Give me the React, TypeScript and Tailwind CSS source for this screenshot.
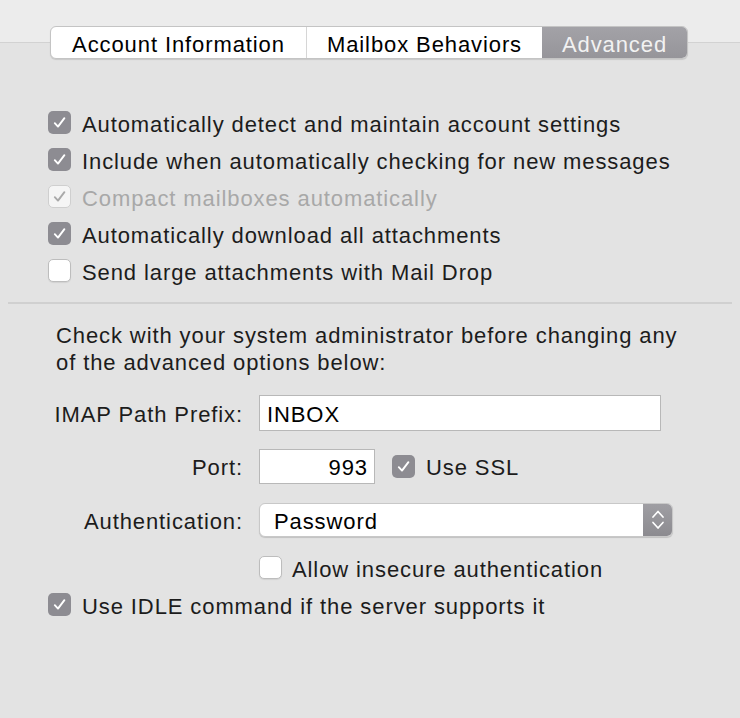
import React from "react"

const font = { fontFamily: '"Liberation Sans", Arial, sans-serif' }

type BoxState = "on" | "off" | "dim"

function Check({ state }: { state: BoxState }) {
  if (state === "off") {
    return <span className="block w-[23px] h-[23px] rounded-[5px] bg-white border border-[#bdbdbd] shadow-[0_1px_1px_rgba(0,0,0,0.08)] shrink-0" />
  }
  const dim = state === "dim"
  return (
    <span
      className={
        dim
          ? "flex items-center justify-center w-[23px] h-[23px] rounded-[5px] bg-[#f5f5f5] border border-[#cfcfcf] shrink-0"
          : "flex items-center justify-center w-[23px] h-[23px] rounded-[5px] bg-[#8d8c92] shrink-0"
      }
    >
      <svg width="15" height="15" viewBox="0 0 15 15" aria-hidden>
        <path
          d="M2.8 8.2 L6 11.6 L12.4 3.2"
          fill="none"
          stroke={dim ? "#a9a9a9" : "#ffffff"}
          strokeWidth="1.9"
          strokeLinecap="round"
          strokeLinejoin="round"
        />
      </svg>
    </span>
  )
}

function Row({ state, label }: { state: BoxState; label: string }) {
  return (
    <div className="flex items-center h-[37px] gap-[11px]">
      <Check state={state} />
      <span className={state === "dim" ? "pt-[3px] text-[#a8a8a8]" : "pt-[3px] text-[#1c1c1c]"}>{label}</span>
    </div>
  )
}

export default function App() {
  return (
    <div className="w-[740px] h-[718px] bg-[#e3e3e3] overflow-hidden text-[22px] tracking-[0.9px]" style={font}>
      {/* window toolbar strip */}
      <div className="h-[43px] bg-[#ececec] border-b border-[#d2d2d2]" />

      {/* segmented control */}
      <div className="relative -mt-[17px] ml-[50px] w-[638px] h-[33px] flex rounded-[6px] border border-[#c4c4c4] bg-white shadow-[0_1px_1px_rgba(0,0,0,0.12)] overflow-hidden">
        <div className="w-[256px] pt-[3px] flex items-center justify-center text-black border-r border-[#d6d6d6]">Account Information</div>
        <div className="w-[235px] pt-[3px] flex items-center justify-center text-black">Mailbox Behaviors</div>
        <div className="flex-1 pt-[3px] flex items-center justify-center bg-gradient-to-b from-[#a3a2a7] to-[#96959a] text-[#f2f2f2]">Advanced</div>
      </div>

      <div className="mt-[45px] pl-[48px]">
        <Row state="on" label="Automatically detect and maintain account settings" />
        <Row state="on" label="Include when automatically checking for new messages" />
        <Row state="dim" label="Compact mailboxes automatically" />
        <Row state="on" label="Automatically download all attachments" />
        <Row state="off" label="Send large attachments with Mail Drop" />
      </div>

      <div className="mt-[13px] mx-[8px] h-[2px] bg-[#d0d0d0]" />

      <p className="mt-[18px] ml-[56px] w-[640px] leading-[27px] text-[#1c1c1c]">
        Check with your system administrator before changing any of the advanced options below:
      </p>

      <div className="mt-[19px] flex flex-col text-[#1c1c1c]">
        <div className="flex items-center h-[36px]">
          <span className="w-[243px] pt-[2px] text-right">IMAP Path Prefix:</span>
          <div className="ml-[16px] w-[402px] h-[36px] pt-[2px] bg-white border border-[#b8b8b8] flex items-center px-[7px] text-black">INBOX</div>
        </div>

        <div className="flex items-center h-[35px] mt-[18px]">
          <span className="w-[243px] pt-[2px] text-right">Port:</span>
          <div className="ml-[16px] w-[116px] h-[35px] pt-[2px] bg-white border border-[#b8b8b8] flex items-center justify-end px-[6px] text-black">993</div>
          <div className="ml-[17px] flex items-center gap-[11px]">
            <Check state="on" />
            <span className="pt-[2px]">Use SSL</span>
          </div>
        </div>

        <div className="flex items-center h-[34px] mt-[19px]">
          <span className="w-[243px] pt-[2px] text-right">Authentication:</span>
          <div className="ml-[16px] w-[414px] h-[34px] flex rounded-[6px] bg-white border border-[#c8c8c8] shadow-[0_1px_1px_rgba(0,0,0,0.15)] overflow-hidden">
            <span className="flex-1 flex items-center pt-[2px] pl-[14px] text-black">Password</span>
            <span className="w-[29px] flex items-center justify-center bg-gradient-to-b from-[#9f9ea3] to-[#8c8b90]">
              <svg width="14" height="22" viewBox="0 0 14 22" aria-hidden>
                <path d="M2 8 L7 2.5 L12 8" fill="none" stroke="#fff" strokeWidth="1.7" strokeLinecap="round" strokeLinejoin="round" />
                <path d="M2 13.5 L7 19 L12 13.5" fill="none" stroke="#fff" strokeWidth="1.7" strokeLinecap="round" strokeLinejoin="round" />
              </svg>
            </span>
          </div>
        </div>

        <div className="flex items-center h-[37px] mt-[12px] pl-[259px] gap-[10px]">
          <Check state="off" />
          <span className="pt-[3px]">Allow insecure authentication</span>
        </div>
      </div>

      <div className="pl-[48px]">
        <Row state="on" label="Use IDLE command if the server supports it" />
      </div>
    </div>
  )
}
